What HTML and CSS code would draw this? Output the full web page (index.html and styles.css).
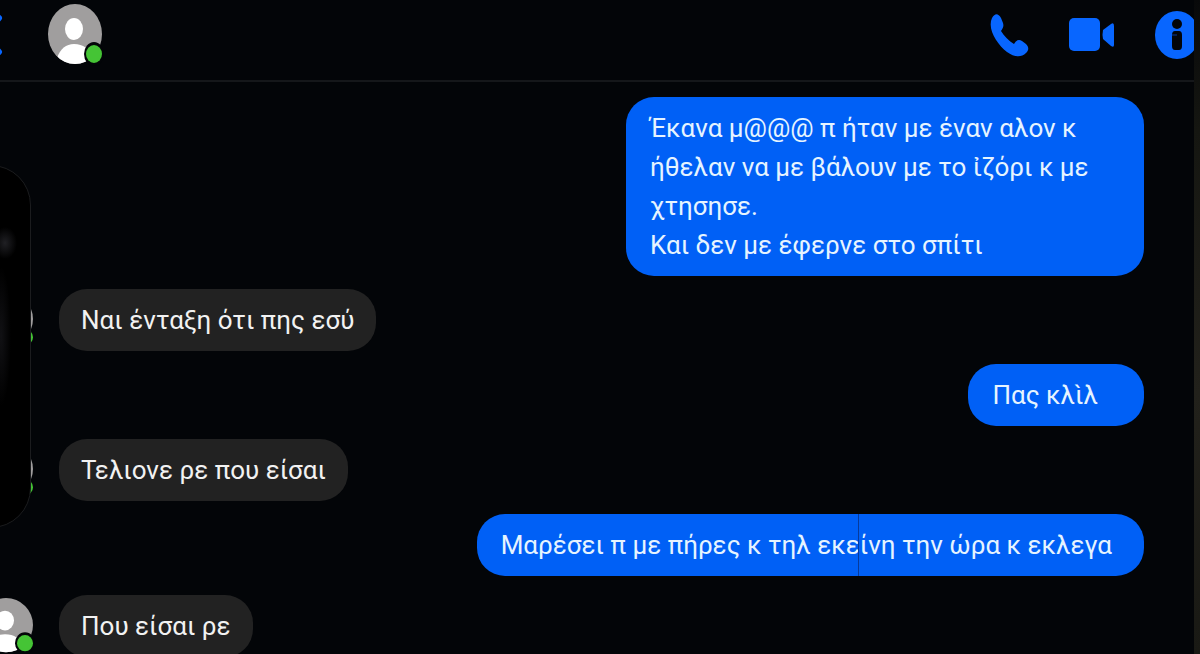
FILE: index.html
```html
<!DOCTYPE html>
<html lang="el">
<head>
<meta charset="utf-8">
<meta name="viewport" content="width=device-width, initial-scale=1">
<title>Συνομιλία</title>
<link rel="stylesheet" href="styles.css">
</head>
<body>
<svg class="defs" aria-hidden="true">
  <symbol id="avatar" viewBox="0 0 56 62" preserveAspectRatio="none">
    <clipPath id="disc"><ellipse cx="27" cy="30" rx="27" ry="30"/></clipPath>
    <g clip-path="url(#disc)">
      <rect width="56" height="62" fill="#a09e9e"/>
      <ellipse cx="26" cy="25" rx="9" ry="11" fill="#fff"/>
      <path d="M9 62V54Q14 40 26 40Q40 40 44 54V62Z" fill="#fff"/>
    </g>
    <ellipse cx="46" cy="50" rx="10" ry="12" fill="#030508"/>
    <ellipse cx="46" cy="50" rx="8" ry="9" fill="#45c435"/>
  </symbol>
</svg>
<div class="chat">
  <header class="bar">
    <button class="icon back" aria-label="Πίσω">
      <svg width="12" height="44" viewBox="0 0 12 44"><path d="M-1 5L-16 22L-1 39" fill="none" stroke="#0866ff" stroke-width="6" stroke-linecap="round"/></svg>
    </button>
    <svg class="avatar" role="img" aria-label="Ενεργός τώρα"><use href="#avatar"/></svg>
    <nav class="actions">
      <button class="icon" aria-label="Κλήση">
        <svg width="40" height="46" viewBox="0 0 40 46"><path d="M3 6C6 1 9 1 12 6L14 11C15 14 14 16 12 19C15 24 20 29 25 32C27 28 30 27 33 29L37 32C40 35 40 38 37 41C32 46 25 45 18 40C8 32-2 17 3 6Z" fill="#0866ff"/></svg>
      </button>
      <button class="icon" aria-label="Βιντεοκλήση">
        <svg width="46" height="34" viewBox="0 0 46 34"><rect width="31" height="33" rx="5" fill="#0866ff"/><path d="M34 12L42 6Q45 4 45 8V27Q45 30 42 28L34 21Q33 17 34 12Z" fill="#0866ff"/></svg>
      </button>
      <button class="icon" aria-label="Πληροφορίες">
        <svg width="41" height="50" viewBox="0 0 41 50"><ellipse cx="22" cy="25" rx="22" ry="24" fill="#0866ff"/><circle cx="22" cy="14" r="5" fill="#030508"/><path d="M20 21H24Q27 21 27 25V36Q27 40 24 40H20Q17 40 17 36V25Q17 21 20 21Z" fill="#030508"/><path d="M17 25H22" fill="none" stroke="#073a9a" stroke-width="1"/></svg>
      </button>
    </nav>
  </header>
  <main class="messages">
    <div class="row sent"><p class="bubble roomy long">Έκανα μ@@@ π ήταν με έναν αλον κ<br>ήθελαν να με βάλουν με το ἰζόρι κ με<br>χτησησε.<br>Και δεν με έφερνε στο σπίτι</p></div>
    <div class="row"><svg class="avatar small"><use href="#avatar"/></svg><p class="bubble">Ναι ένταξη ότι πης εσύ</p></div>
    <div class="row sent"><p class="bubble roomy">Πας κλὶλ</p></div>
    <div class="row"><svg class="avatar small"><use href="#avatar"/></svg><p class="bubble">Τελιονε ρε που είσαι</p></div>
    <div class="row sent"><p class="bubble wide">Μαρέσει π με πήρες κ τηλ εκείνη την ώρα κ εκλεγα<span class="seam"></span></p></div>
    <div class="row last"><svg class="avatar small"><use href="#avatar"/></svg><p class="bubble">Που είσαι ρε</p></div>
  </main>
  <div class="device"></div>
  <div class="edge"></div>
</div>
</body>
</html>
```
FILE: styles.css
```css
* { box-sizing: border-box; }
body {
  margin: 0;
  background: #030508;
  color: #f2f2f2;
  font-family: Roboto, "Noto Sans", sans-serif;
  font-size: 26px;
  line-height: 39px;
}
.defs { position: absolute; width: 0; height: 0; }
.chat { position: relative; height: 100vh; overflow: hidden; }
.bar {
  display: flex;
  align-items: center;
  height: 82px;
  padding: 0 4px 10px 0;
  border-bottom: 2px solid #15171a;
}
.icon {
  display: block;
  padding: 0;
  border: 0;
  background: none;
  cursor: pointer;
}
.icon svg { display: block; }
.back { width: 48px; }
.back svg { overflow: visible; }
.avatar { flex: none; width: 56px; height: 62px; }
.small { width: 56px; height: 56px; }
.actions {
  display: flex;
  align-items: center;
  gap: 40px;
  margin-left: auto;
}
.messages {
  display: flex;
  flex-direction: column;
  gap: 13px;
  padding: 15px 56px 0 0;
}
.row {
  display: flex;
  align-items: center;
  gap: 24px;
  margin-left: -21px;
}
.sent { justify-content: flex-end; margin-left: 0; }
.last { margin-top: 6px; }
.bubble {
  margin: 0;
  padding: 12px 22px 11px;
  border-radius: 28px;
  background: #222;
}
.sent .bubble { position: relative; background: #0060f6; color: #e6f4ff; padding-left: 24px; }
.sent .roomy { padding-right: 46px; }
.sent .long { min-width: 518px; }
.sent .wide { padding-right: 32px; }
.seam {
  position: absolute;
  top: 0;
  bottom: 0;
  right: 285px;
  width: 1px;
  background: #073a9a;
}
.device {
  position: absolute;
  top: 165px;
  left: -60px;
  width: 91px;
  height: 363px;
  border: 1px solid #1b1c1e;
  border-radius: 40px;
  background:
    radial-gradient(ellipse 12px 16px at 64px 77px, #202024, transparent),
    radial-gradient(ellipse 10px 70px at 60px 170px, #111114, transparent),
    #000;
}
.edge {
  position: absolute;
  top: 0;
  right: 0;
  bottom: 0;
  width: 6px;
  background: linear-gradient(#08090a, #151611 20%, #22211b 60%, #191914);
}
```
